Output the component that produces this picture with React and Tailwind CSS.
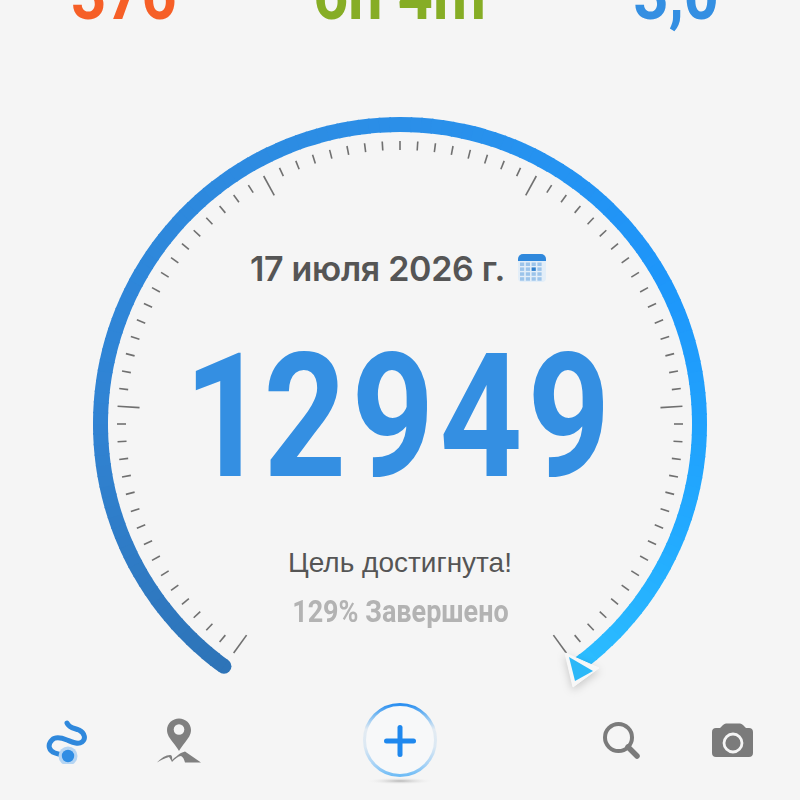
const CX = 400, CY = 424;
const pt = (deg, r) => {
  const a = (deg * Math.PI) / 180;
  return [CX + r * Math.sin(a), CY - r * Math.cos(a)];
};
const STOPS = [
  [-144, [46, 116, 184]],
  [-90, [48, 131, 211]],
  [0, [43, 143, 232]],
  [60, [30, 150, 250]],
  [110, [34, 170, 255]],
  [144, [44, 190, 255]],
];
const colorAt = (d) => {
  for (let i = 0; i < STOPS.length - 1; i++) {
    const [a, ca] = STOPS[i];
    const [b, cb] = STOPS[i + 1];
    if (d <= b) {
      const t = (d - a) / (b - a);
      const c = ca.map((v, k) => Math.round(v + (cb[k] - v) * t));
      return `rgb(${c.join(",")})`;
    }
  }
  return "rgb(44,190,255)";
};

function Gauge() {
  const segs = [];
  for (let d = -144; d < 144; d += 2) {
    const [x1, y1] = pt(d, 299.5);
    const [x2, y2] = pt(d + 2.3, 299.5);
    segs.push(
      <path key={d} d={`M${x1} ${y1} A299.5 299.5 0 0 1 ${x2} ${y2}`} stroke={colorAt(d)} strokeWidth="15" fill="none" />
    );
  }
  const ticks = [];
  for (let i = 0; i <= 80; i++) {
    const d = -144 + i * 3.6;
    const long = i % 16 === 0;
    const [x1, y1] = pt(d, long ? 261 : 274);
    const [x2, y2] = pt(d, 283);
    ticks.push(<line key={i} x1={x1} y1={y1} x2={x2} y2={y2} stroke="#707070" strokeWidth="1.600" />);
  }
  const [sx, sy] = pt(-144, 299.5);
  return (
    <svg className="absolute left-0 top-0" width="800" height="682" viewBox="0 18 800 682">
      {ticks}
      <circle cx={sx} cy={sy} r="7.500" fill="rgb(46,116,184)" />
      {segs}
      <g style={{ filter: "drop-shadow(0 3px 4px rgba(0,0,0,.18))" }}>
        <polygon points="565,653 599,668 573,687" fill="#f7f7f7" stroke="#f7f7f7" strokeWidth="1" strokeLinejoin="round" />
      </g>
      <polygon points="569,657 593,671 575,681" fill="#2cb8f8" />
    </svg>
  );
}

function CalendarIcon() {
  const cells = [];
  for (let r = 0; r < 4; r++) {
    for (let c = 0; c < 4; c++) {
      const active = r === 1 && c === 2;
      cells.push(<rect key={`${r}-${c}`} x={3 + c * 5.8} y={9.5 + r * 4.9} width="4.2" height="3.5" fill={active ? "#2f80cf" : "#9cc4ea"} />);
    }
  }
  return (
    <svg width="30" height="30" viewBox="0 0 30 30">
      <path d="M1 8V6a5 5 0 0 1 5-5h18a5 5 0 0 1 5 5v2z" fill="#2f88dc" />
      <path d="M1 8h28v17a4 4 0 0 1-4 4H5a4 4 0 0 1-4-4z" fill="#e3eef8" />
      {cells}
    </svg>
  );
}

function RouteIcon() {
  return (
    <svg width="44" height="44" viewBox="45 720 44 44">
      <path d="M67 723C69 728 74 728 79 730C85 733 86 739 82 742C78 745 72 742 67 740C62 738 56 736 52 740C47 745 49 751 55 753C60 755 64 755 68 756" fill="none" stroke="#2f88dc" strokeWidth="5" strokeLinecap="round" />
      <circle cx="68" cy="756" r="9.500" fill="#b5d5f3" />
      <circle cx="68" cy="756" r="6.200" fill="#2f8de4" />
    </svg>
  );
}

function PinIcon() {
  return (
    <svg width="44" height="46" viewBox="157 718 44 46" className="-mt-[2px]">
      <path d="M179 718.500c-6.500 0-12 5-12 11.500 0 5 3 8.500 6 12.500 2.500 3 4.500 6 6 8.500 1.500-2.500 3.500-5.500 6-8.500 3-4 6-7.500 6-12.500 0-6.500-5.500-11.500-12-11.500z" fill="#808080" />
      <circle cx="179" cy="729.500" r="5.300" fill="#f5f5f5" />
      <path d="M157 762.500C161 758 166 755 170 755C172 755 172.500 757 172 760C176 757 179 753 185 751.500L201 762.500H185C184 759 183 757 181 756C178 756 175 759 172 762C171 760 170 758 169 757C165 758 161 760 157 762.500Z" fill="#808080" />
    </svg>
  );
}

function SearchIcon() {
  return (
    <svg width="44" height="44" viewBox="599 720 44 44">
      <circle cx="618.500" cy="737.500" r="13.500" fill="none" stroke="#7b7b7b" strokeWidth="4" />
      <line x1="628" y1="747" x2="637" y2="756" stroke="#7b7b7b" strokeWidth="5.500" strokeLinecap="round" />
    </svg>
  );
}

function CameraIcon() {
  return (
    <svg width="44" height="44" viewBox="711 720 44 44">
      <path d="M716 728h4l3-3c1-1 2-1.500 3-1.500h14c1 0 2 .5 3 1.500l3 3h3c2.500 0 4 1.500 4 4v21c0 2.500-1.500 4-4 4h-33c-2.500 0-4-1.500-4-4v-21c0-2.500 1.500-4 4-4z" fill="#7b7b7b" />
      <circle cx="733" cy="743" r="9" fill="none" stroke="#f5f5f5" strokeWidth="2.800" />
    </svg>
  );
}

function PlusButton() {
  return (
    <svg width="80" height="90" viewBox="360 700 80 90">
      <defs>
        <linearGradient id="ring" x1="0" y1="0" x2="0" y2="1">
          <stop offset="0" stopColor="#2b8ff0" />
          <stop offset="0.15" stopColor="#7cbcf2" />
          <stop offset="0.35" stopColor="#e3ebf2" />
          <stop offset="0.6" stopColor="#dbe8f3" />
          <stop offset="0.85" stopColor="#a6d2f6" />
          <stop offset="1" stopColor="#6fbcf6" />
        </linearGradient>
        <radialGradient id="shadow" cx="0.5" cy="0.5" r="0.5">
          <stop offset="0" stopColor="#b5b5b5" />
          <stop offset="1" stopColor="#f5f5f5" stopOpacity="0" />
        </radialGradient>
      </defs>
      <ellipse cx="400" cy="781" rx="34" ry="3.500" fill="url(#shadow)" />
      <circle cx="400" cy="740" r="35.500" fill="#f7f8f9" stroke="url(#ring)" strokeWidth="3" style={{ filter: "blur(0.7px)" }} />
      <line x1="386.500" y1="741" x2="413.500" y2="741" stroke="#1f88ee" strokeWidth="5" strokeLinecap="round" />
      <line x1="400" y1="727.500" x2="400" y2="754.500" stroke="#1f88ee" strokeWidth="5" strokeLinecap="round" />
    </svg>
  );
}

function Stat({ value, color }) {
  return (
    <div className={`w-[200px] h-[18px] flex justify-center items-end ${color}`}>
      <span className="scale-x-[.85] whitespace-nowrap font-['Roboto',sans-serif] font-bold text-[72px] leading-[72px] mb-[-13px]">{value}</span>
    </div>
  );
}

export default function App() {
  return (
    <div className="w-[800px] h-[800px] bg-[#f5f5f5] overflow-hidden flex flex-col">
      <div className="flex justify-between px-6 h-[18px]">
        <Stat value="376" color="text-[#f65f27]" />
        <Stat value="6h 4m" color="text-[#86ad25]" />
        <Stat value="3,0" color="text-[#348fe2]" />
      </div>
      <div className="relative h-[682px] flex flex-col items-center">
        <Gauge />
        <div className="relative mt-[230px] mr-[3px] h-[40px] flex items-center gap-[12px]">
          <span className="font-['Inter',sans-serif] font-semibold text-[34px] tracking-[-0.3px] text-[#555555] whitespace-nowrap">17 июля 2026 г.</span>
          <CalendarIcon />
        </div>
        <div className="relative mt-[43px] font-['Roboto',sans-serif] font-bold text-[172px] leading-[172px] tracking-[6px] text-[#348fe2] scale-x-[.84] whitespace-nowrap"><span className="-mr-[10px]">1</span>2949</div>
        <div className="relative mt-[43px] font-['Liberation_Sans',sans-serif] text-[28px] leading-[34px] text-[#555555] whitespace-nowrap">Цель достигнута!</div>
        <div className="relative mt-[14px] font-['Roboto',sans-serif] font-bold text-[31px] leading-[36px] text-[#b3b3b3] scale-x-[.87] whitespace-nowrap">129% Завершено</div>
      </div>
      <div className="h-[100px] flex justify-between items-start px-[45px] pt-[20px]">
        <div className="flex gap-[68px]">
          <RouteIcon />
          <PinIcon />
        </div>
        <div className="-mt-[20px]">
          <PlusButton />
        </div>
        <div className="flex gap-[68px]">
          <SearchIcon />
          <CameraIcon />
        </div>
      </div>
    </div>
  );
}
